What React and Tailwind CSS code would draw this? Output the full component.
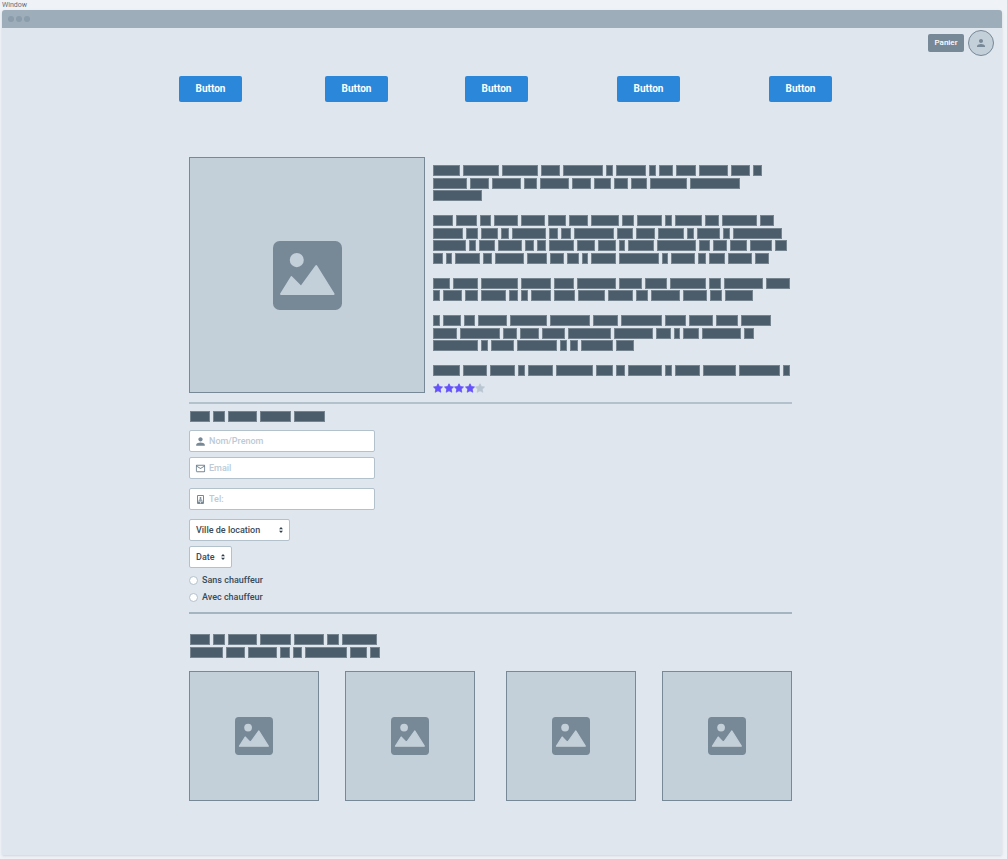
import React from "react";
import { MdPerson, MdMailOutline } from "react-icons/md";

/* Each line lists where its words start; the last number closes the line. */
const WORD_GAP = 3;

const DESCRIPTION = [
  [0, 30, 69, 108, 130, 173, 183, 216, 226, 243, 266, 298, 320, 332],
  [0, 37, 59, 91, 107, 139, 161, 181, 198, 217, 257, 310],
  [0, 52],
  [],
  [0, 23, 47, 61, 88, 115, 136, 158, 189, 204, 232, 242, 272, 289, 327, 344],
  [0, 33, 48, 68, 79, 116, 128, 141, 184, 203, 225, 254, 264, 290, 300, 352],
  [0, 36, 46, 65, 92, 104, 116, 144, 165, 186, 195, 224, 266, 280, 297, 317, 342, 357],
  [0, 13, 22, 50, 62, 94, 117, 134, 149, 158, 186, 229, 238, 265, 276, 295, 322, 339],
  [],
  [0, 20, 48, 88, 121, 144, 186, 212, 237, 276, 291, 333, 360],
  [0, 10, 32, 48, 76, 88, 98, 121, 145, 175, 203, 218, 250, 277, 292, 323],
  [],
  [0, 10, 31, 45, 77, 117, 160, 188, 232, 256, 283, 308, 341],
  [0, 27, 70, 87, 109, 135, 181, 223, 241, 250, 269, 311, 324],
  [0, 48, 58, 84, 127, 137, 148, 183, 204],
  [],
  [0, 30, 57, 85, 95, 123, 163, 183, 195, 232, 242, 270, 306, 350, 360],
];

const FORM_TITLE = [[0, 23, 38, 70, 104, 138]];

const GALLERY_TITLE = [
  [0, 23, 38, 70, 104, 137, 152, 190],
  [0, 36, 58, 90, 103, 115, 160, 180, 193],
];

function Greeked({ lines, className = "" }) {
  return (
    <div aria-hidden="true" className={`flex flex-col justify-between ${className}`}>
      {lines.map((line, i) => (
        <div key={i} className="flex h-[11px] gap-[3px]">
          {line.slice(0, -1).map((start, j) => (
            <span
              key={j}
              className="h-full shrink-0 border border-[#75848f] bg-[#4b5d6b]"
              style={{ width: line[j + 1] - start - WORD_GAP }}
            />
          ))}
        </div>
      ))}
    </div>
  );
}

function Picture({ iconClass }) {
  return (
    <div className="flex aspect-square w-full items-center justify-center border border-[#778896] bg-[#c3cfd9]">
      <svg viewBox="0 0 206 206" className={iconClass} aria-hidden="true">
        <rect width="206" height="206" rx="20" fill="#778896" />
        <circle cx="71" cy="57" r="21" fill="#c3cfd9" />
        <path
          d="M24 158 L55 108 L84 137 L129 75 L181 158 Z"
          fill="#c3cfd9"
          stroke="#c3cfd9"
          strokeWidth="6"
          strokeLinejoin="round"
        />
      </svg>
    </div>
  );
}

function ContactPhoneIcon() {
  return (
    <svg viewBox="0 0 14 18" className="h-[9px] w-[7px]" aria-hidden="true">
      <path
        fillRule="evenodd"
        fill="#778896"
        d="M2 0h10a2 2 0 0 1 2 2v14a2 2 0 0 1-2 2H2a2 2 0 0 1-2-2V2a2 2 0 0 1 2-2zM2 2v11h10V2zM6 14.5v2h2v-2z"
      />
      <circle cx="7" cy="6" r="2" fill="#778896" />
      <path d="M3 11.5c0-4 8-4 8 0z" fill="#778896" />
    </svg>
  );
}

function Field({ id, label, type, icon }) {
  return (
    <div className="flex h-[22px] w-[186px] items-center rounded-[2px] border border-[#b3c1cd] bg-white">
      <label htmlFor={id} aria-label={label} className="flex w-[19px] shrink-0 items-center justify-center pl-[2px] text-[#778896]">
        {icon}
      </label>
      <input
        id={id}
        type={type}
        placeholder={label}
        className="h-full min-w-0 flex-1 bg-transparent text-[9px] leading-none font-medium text-[#394b59] outline-none placeholder:text-[#bccad6]"
      />
    </div>
  );
}

function Dropdown({ id, label, className }) {
  return (
    <div className={`relative h-[22px] ${className}`}>
      <select
        id={id}
        aria-label={label}
        className="block h-full w-full appearance-none rounded-[2px] border border-[#b3c1cd] bg-white pl-[6px] text-[9px] leading-none font-medium text-[#394b59] outline-none"
      >
        <option>{label}</option>
      </select>
      <svg
        viewBox="0 0 8 12"
        className="pointer-events-none absolute top-2 right-[7px] h-[6px] w-1"
        aria-hidden="true"
      >
        <path d="M4 0 L8 4.5 H0z M4 12 L8 7.5 H0z" fill="#2f3f4c" />
      </svg>
    </div>
  );
}

function Radio({ id, label }) {
  return (
    <div className="flex h-[17px] items-center gap-1">
      <input
        id={id}
        type="radio"
        name="chauffeur"
        className="size-[9px] appearance-none rounded-full border border-[#b3c1cd] bg-white checked:border-4 checked:border-[#2b87da]"
      />
      <label htmlFor={id} className="text-[9px] leading-none font-medium text-[#394b59]">
        {label}
      </label>
    </div>
  );
}

function Rating() {
  return (
    <div role="img" aria-label="4 / 5" className="flex w-[52px] justify-between">
      {[1, 2, 3, 4, 5].map((n) => (
        <svg key={n} viewBox="0 0 20 19" className={n <= 4 ? "size-[10px] text-[#6552fa]" : "size-[10px] text-[#b9c6d2]"} aria-hidden="true">
          <path
            fill="currentColor"
            stroke="currentColor"
            strokeWidth="1.5"
            strokeLinejoin="round"
            d="M10 1 L12.8 6.5 L19 7.4 L14.5 11.8 L15.6 18 L10 15.1 L4.4 18 L5.5 11.8 L1 7.4 L7.2 6.5z"
          />
        </svg>
      ))}
    </div>
  );
}

export default function App() {
  return (
    <div className="min-h-screen bg-[#eff3f7] pr-[5px] pb-1 pl-[2px] font-['Roboto',sans-serif]">
      <h1 className="flex h-[10px] items-end pb-px text-[7px] leading-none text-[#5c7080]">Window</h1>

      <div className="rounded-t-[3px] bg-[#dfe6ee] pb-[54px] shadow-sm">
        <div className="flex h-[18px] items-center gap-[2px] rounded-t-[3px] bg-[#9dadb9] pl-[6px]">
          <span className="size-[6px] rounded-full bg-[#8b9caa]" />
          <span className="size-[6px] rounded-full bg-[#8b9caa]" />
          <span className="size-[6px] rounded-full bg-[#8b9caa]" />
        </div>

        <header className="flex items-center justify-end gap-1 pt-[2px] pr-2">
          <button type="button" className="h-[18px] w-9 rounded-[2px] bg-[#778896] text-[8px] leading-none font-medium text-white">
            Panier
          </button>
          <button
            type="button"
            aria-label="Compte"
            className="flex size-[26px] items-center justify-center rounded-full border border-[#778896] bg-[#c3cfd9] text-[#778896]"
          >
            <MdPerson size={12} />
          </button>
        </header>

        <nav className="mt-5 mr-[170px] ml-[177px] grid grid-cols-[146fr_140fr_152fr_152fr_63fr]">
          {[1, 2, 3, 4, 5].map((n) => (
            <button key={n} type="button" className="h-[26px] w-[63px] rounded-[2px] bg-[#2b87da] text-[10px] leading-none font-bold text-white">
              Button
            </button>
          ))}
        </nav>

        <main className="mt-[55px] mr-[210px] ml-[187px]">
          <section className="flex gap-2">
            <div className="w-[236px] shrink-0">
              <Picture iconClass="size-[69px]" />
            </div>
            <div className="pt-2">
              <Greeked lines={DESCRIPTION} className="h-[211px]" />
              <div className="mt-[7px]">
                <Rating />
              </div>
            </div>
          </section>

          <hr className="mt-[9px] border-t-2 border-[#b3c1cd]" />

          <form className="pt-[7px]">
            <Greeked lines={FORM_TITLE} className="pl-px" />
            <div className="mt-2 flex flex-col gap-[5px]">
              <Field id="nom" label="Nom/Prenom" type="text" icon={<MdPerson size={13} />} />
              <Field id="email" label="Email" type="email" icon={<MdMailOutline size={11} />} />
            </div>
            <div className="mt-[9px] flex flex-col gap-[9px]">
              <Field id="tel" label="Tel:" type="tel" icon={<ContactPhoneIcon />} />
              <Dropdown id="ville" label="Ville de location" className="w-[101px]" />
            </div>
            <div className="mt-[5px]">
              <Dropdown id="date" label="Date" className="w-[43px]" />
            </div>
            <div className="mt-1">
              <Radio id="sans" label="Sans chauffeur" />
              <Radio id="avec" label="Avec chauffeur" />
            </div>
          </form>

          <hr className="mt-[6px] border-t-2 border-[#a5b4c1]" />

          <section className="pt-5">
            <Greeked lines={GALLERY_TITLE} className="h-6 pl-px" />
            <div className="mt-[13px] grid grid-cols-[156fr_161fr_156fr_130fr]">
              {[1, 2, 3, 4].map((n) => (
                <div key={n} className="w-[130px]">
                  <Picture iconClass="size-[38px]" />
                </div>
              ))}
            </div>
          </section>
        </main>
      </div>
    </div>
  );
}
